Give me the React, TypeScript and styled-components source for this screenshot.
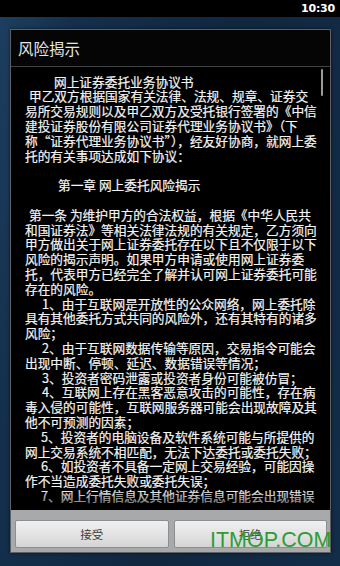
import * as React from 'react';
import styled, { createGlobalStyle } from 'styled-components';

const GlobalStyle = createGlobalStyle`
  html, body {
    margin: 0;
    padding: 0;
    background: #10263e;
  }
  * {
    box-sizing: border-box;
  }
`;

const cjk = `"Noto Sans CJK SC", "Droid Sans Fallback", sans-serif`;

const Screen = styled.div`
  position: relative;
  width: 340px;
  height: 566px;
  overflow: hidden;
  display: flex;
  flex-direction: column;
  background: linear-gradient(100deg, #1e3f60 0%, #142f4c 18%, #10273f 55%, #132c47 100%);
`;

const StatusBar = styled.div`
  height: 17px;
  flex: none;
  background: #000;
  display: flex;
  align-items: center;
  justify-content: flex-end;
  padding-right: 5px;
`;

const Clock = styled.span`
  color: #fff;
  font-family: "DejaVu Sans", sans-serif;
  font-weight: 700;
  font-size: 11px;
  letter-spacing: -0.2px;
`;

const Dialog = styled.div`
  margin: 12px 9px 13px 10px;
  flex: 1;
  min-height: 0;
  display: flex;
  flex-direction: column;
  border: 1px solid #5c5f63;
  background: #000;
  box-shadow: 0 0 3px rgba(0, 0, 0, 0.6);
`;

const TitleBar = styled.div`
  height: 37px;
  flex: none;
  display: flex;
  align-items: center;
  padding-left: 7px;
  background: #050505;
  border-bottom: 1px solid #404244;
`;

const Title = styled.h1`
  margin: 0;
  font-family: ${cjk};
  font-weight: 400;
  font-size: 15.5px;
  color: #e6e6e6;
`;

const Body = styled.div`
  position: relative;
  flex: 1;
  min-height: 0;
  overflow: hidden;
  padding: 7.6px 0 0 14px;
  background: #000;
`;

const Line = styled.div<{ $indent: number }>`
  height: 14.8px;
  line-height: 14.8px;
  white-space: nowrap;
  padding-left: ${p => p.$indent}px;
  font-family: ${cjk};
  font-size: 12.7px;
  color: #f4f4f4;
  -webkit-text-stroke: 0.2px #f4f4f4;
`;

const FadeEdge = styled.div`
  position: absolute;
  left: 0;
  right: 0;
  bottom: 0;
  height: 20px;
  background: linear-gradient(to bottom, rgba(0, 0, 0, 0) 0%, rgba(0, 0, 0, 0.7) 100%);
  pointer-events: none;
`;

const ScrollThumb = styled.div`
  position: absolute;
  top: 2px;
  right: 7px;
  width: 2px;
  height: 27px;
  border-radius: 1px;
  background: #9a9a9a;
`;

const ButtonPanel = styled.div`
  flex: none;
  height: 42px;
  display: flex;
  gap: 5px;
  padding: 10px 3px 4px 4px;
  background: #a7a9ab;
`;

const Button = styled.button`
  flex: 1;
  height: 28px;
  border: 1px solid #8c8e90;
  border-radius: 2px;
  background: linear-gradient(to bottom, #f0f0f0 0%, #e2e2e2 55%, #d4d4d4 100%);
  font-family: ${cjk};
  font-size: 11.5px;
  color: #3c3c3c;
  padding: 0;
`;

const Watermark = styled.div`
  position: absolute;
  left: 210px;
  top: 527px;
  font-family: "Liberation Sans", Arial, sans-serif;
  font-size: 21.5px;
  line-height: 26px;
  color: #2f9b33;
  pointer-events: none;
`;

const lines: [number, string][] = [
  [29, '网上证券委托业务协议书'],
  [4, '甲乙双方根据国家有关法律、法规、规章、证券交'],
  [0, '易所交易规则以及甲乙双方及受托银行签署的《中信'],
  [0, '建投证券股份有限公司证券代理业务协议书》（下'],
  [0, '称“证券代理业务协议书”），经友好协商，就网上委'],
  [0, '托的有关事项达成如下协议：'],
  [0, ''],
  [33, '第一章 网上委托风险揭示'],
  [0, ''],
  [4, '第一条 为维护甲方的合法权益，根据《中华人民共'],
  [0, '和国证券法》等相关法律法规的有关规定，乙方须向'],
  [0, '甲方做出关于网上证券委托存在以下且不仅限于以下'],
  [0, '风险的揭示声明。如果甲方申请或使用网上证券委'],
  [0, '托，代表甲方已经完全了解并认可网上证券委托可能'],
  [0, '存在的风险。'],
  [17, '1、由于互联网是开放性的公众网络，网上委托除'],
  [0, '具有其他委托方式共同的风险外，还有其特有的诸多'],
  [0, '风险；'],
  [17, '2、由于互联网数据传输等原因，交易指令可能会'],
  [0, '出现中断、停顿、延迟、数据错误等情况；'],
  [17, '3、投资者密码泄露或投资者身份可能被仿冒；'],
  [17, '4、互联网上存在黑客恶意攻击的可能性，存在病'],
  [0, '毒入侵的可能性，互联网服务器可能会出现故障及其'],
  [0, '他不可预测的因素；'],
  [16, '5、投资者的电脑设备及软件系统可能与所提供的'],
  [0, '网上交易系统不相匹配，无法下达委托或委托失败；'],
  [16, '6、如投资者不具备一定网上交易经验，可能因操'],
  [0, '作不当造成委托失败或委托失误；'],
  [16, '7、网上行情信息及其他证券信息可能会出现错误'],
];

export default function App() {
  return (
    <>
      <GlobalStyle />
      <Screen>
        <StatusBar>
          <Clock>10:30</Clock>
        </StatusBar>
        <Dialog>
          <TitleBar>
            <Title>风险揭示</Title>
          </TitleBar>
          <Body>
            {lines.map(([indent, text], i) => (
              <Line key={i} $indent={indent}>
                {text || '\u00a0'}
              </Line>
            ))}
            <ScrollThumb />
            <FadeEdge />
          </Body>
          <ButtonPanel>
            <Button>接受</Button>
            <Button>拒绝</Button>
          </ButtonPanel>
        </Dialog>
        <Watermark>ITMOP.COM</Watermark>
      </Screen>
    </>
  );
}
